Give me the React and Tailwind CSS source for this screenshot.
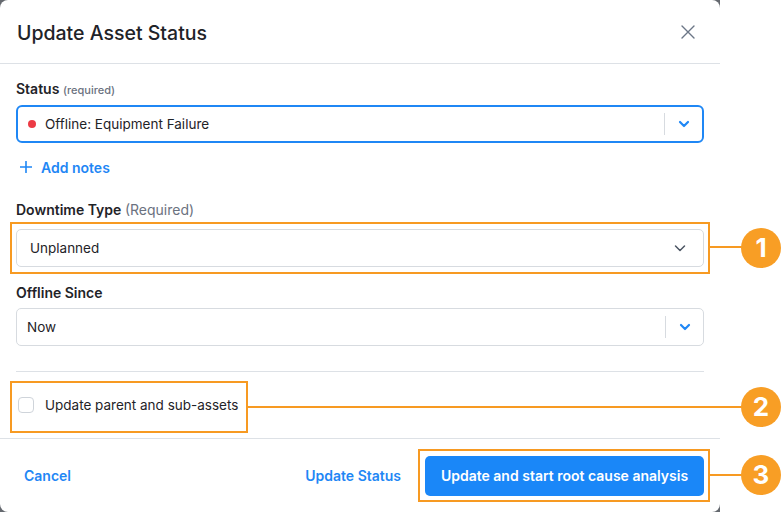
import React from "react";

const font = { fontFamily: "Inter, 'Noto Sans', sans-serif" };

function ChevronBlue() {
  return (
    <svg width="14" height="14" viewBox="0 0 14 14" fill="none">
      <path d="M3 5l4 4 4-4" stroke="#1f87f5" strokeWidth="2.2" strokeLinecap="round" strokeLinejoin="round" />
    </svg>
  );
}

function ChevronGray() {
  return (
    <svg width="14" height="14" viewBox="0 0 14 14" fill="none">
      <path d="M2.5 5l4.5 4.5L11.5 5" stroke="#4b5563" strokeWidth="1.5" strokeLinecap="round" strokeLinejoin="round" />
    </svg>
  );
}

function Badge({ n }) {
  return (
    <div className="w-[40px] h-[40px] rounded-full bg-[#f89e25] flex items-center justify-center text-white text-[26px] font-bold leading-none">
      {n}
    </div>
  );
}

export default function App() {
  return (
    <div className="relative w-[782px] h-[512px] bg-white overflow-hidden" style={font}>
      <div className="flex h-full">
        <div className="w-[720px] h-full bg-[#65696f]">
          <div className="w-full h-full bg-white rounded-[8px] flex flex-col">
            {/* header */}
            <div className="h-[64px] border-b border-[#dde1e6] flex items-center justify-between pl-[17px] pr-[24px] pt-[3px]">
              <h1 className="text-[19.5px] leading-[24px] font-medium text-[#1f2328]">Update Asset Status</h1>
              <svg width="16" height="16" viewBox="0 0 16 16" fill="none" className="-mt-[3px]">
                <path d="M2 2l12 12M14 2L2 14" stroke="#6b7686" strokeWidth="1.4" strokeLinecap="round" />
              </svg>
            </div>
            {/* body */}
            <div className="px-[16px] pt-[16px] flex-1 flex flex-col">
              <div className="text-[14px] leading-[18px] font-semibold text-[#1f2328]">
                Status <span className="text-[11px] font-medium text-[#6b7280]">(required)</span>
              </div>
              <div className="mt-[6px] h-[38px] border-2 border-[#1f87f5] rounded-[6px] flex items-center">
                <span className="ml-[10px] w-[8px] h-[8px] rounded-full bg-[#ec3b45]" />
                <span className="ml-[9px] text-[13.5px] text-[#1f2328] flex-1">Offline: Equipment Failure</span>
                <span className="w-px h-[22px] bg-[#d7dbe0]" />
                <span className="w-[37px] flex justify-center"><ChevronBlue /></span>
              </div>
              <div className="mt-[14px] h-[20px] flex items-center gap-[9px] pl-[4px]">
                <svg width="12" height="12" viewBox="0 0 12 12" fill="none">
                  <path d="M6 0.5v11M0.5 6h11" stroke="#1f87f5" strokeWidth="1.6" strokeLinecap="round" />
                </svg>
                <span className="text-[14px] font-semibold text-[#1f87f5]">Add notes</span>
              </div>
              <div className="mt-[24px] text-[14px] leading-[18px] font-semibold text-[#1f2328]">
                Downtime Type <span className="font-normal text-[#6b7280]">(Required)</span>
              </div>
              <div className="mt-[10px] h-[38px] border border-[#d7dbe0] rounded-[5px] flex items-center pl-[13px] pr-[16px]">
                <span className="text-[13.5px] text-[#1f2328] flex-1">Unplanned</span>
                <ChevronGray />
              </div>
              <div className="mt-[17px] text-[14px] leading-[18px] font-semibold text-[#1f2328]">Offline Since</div>
              <div className="mt-[6px] h-[38px] border border-[#d7dbe0] rounded-[5px] flex items-center">
                <span className="ml-[10px] text-[13.5px] text-[#1f2328] flex-1">Now</span>
                <span className="w-px h-[22px] bg-[#d7dbe0]" />
                <span className="w-[37px] flex justify-center"><ChevronBlue /></span>
              </div>
              <div className="mt-[25px] border-t border-[#dde1e6]" />
              <div className="mt-[23px] flex items-center gap-[11px] pl-[2px]">
                <span className="w-[16px] h-[16px] rounded-[4px] border border-[#cfd4da] bg-white" />
                <span className="text-[13.5px] text-[#1f2328]">Update parent and sub-assets</span>
              </div>
            </div>
            {/* footer */}
            <div className="h-[74px] border-t border-[#dde1e6] flex items-center pl-[24px] pr-[16px]">
              <span className="text-[14px] font-semibold text-[#1f87f5] flex-1">Cancel</span>
              <span className="text-[14px] font-semibold text-[#1f87f5] mr-[24px]">Update Status</span>
              <button className="h-[40px] w-[279px] rounded-[5px] bg-[#1a87f8] text-white text-[14px] font-semibold">
                Update and start root cause analysis
              </button>
            </div>
          </div>
        </div>
        <div className="flex-1" />
      </div>

      {/* annotations */}
      <div className="absolute left-[10px] top-[222px] w-[700px] h-[52px] border-2 border-[#f79a22]" />
      <div className="absolute left-[710px] top-[246px] w-[32px] h-[2px] bg-[#f79a22]" />
      <div className="absolute left-[741px] top-[228px]"><Badge n="1" /></div>

      <div className="absolute left-[10px] top-[381px] w-[238px] h-[52px] border-2 border-[#f79a22]" />
      <div className="absolute left-[248px] top-[406px] w-[494px] h-[2px] bg-[#f79a22]" />
      <div className="absolute left-[741px] top-[387px]"><Badge n="2" /></div>

      <div className="absolute left-[418px] top-[449px] w-[292px] h-[53px] border-2 border-[#f79a22]" />
      <div className="absolute left-[710px] top-[474px] w-[32px] h-[2px] bg-[#f79a22]" />
      <div className="absolute left-[741px] top-[455px]"><Badge n="3" /></div>
    </div>
  );
}
